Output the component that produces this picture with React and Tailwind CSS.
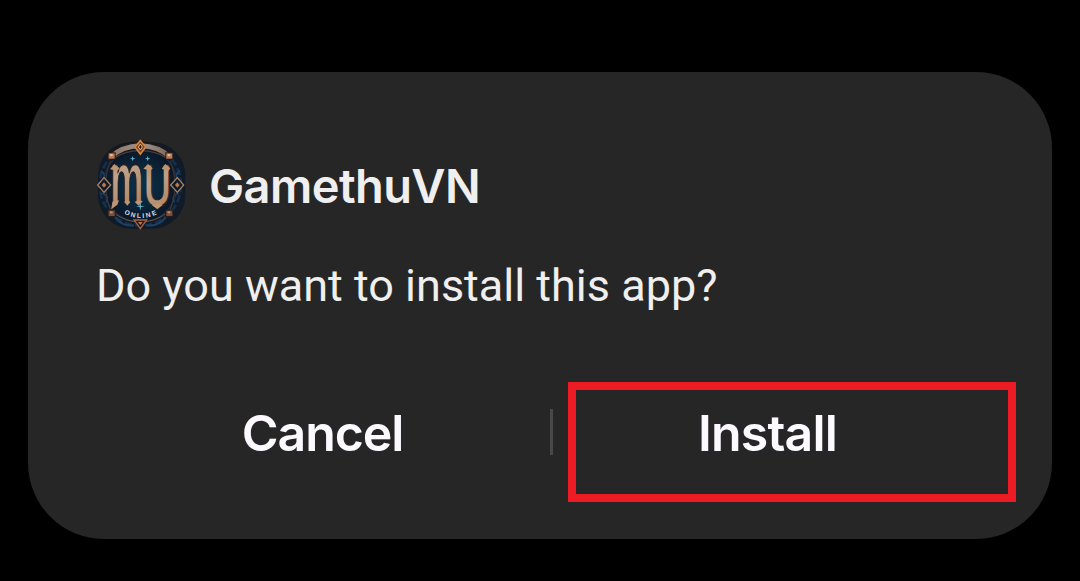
const STUDS = [
  { x: 65, y: 66 },
  { x: 238, y: 66 },
  { x: 65, y: 238 },
  { x: 238, y: 238 },
];

const SPARKS = [
  { x: 128, y: 74, r: 8 },
  { x: 173, y: 74, r: 8 },
  { x: 151, y: 217, r: 13 },
];

function GameLogo() {
  return (
    <svg viewBox="21 18 270 270" className="size-[90px] shrink-0 overflow-visible" aria-label="MU Online">
      <defs>
        <linearGradient id="bronze" x1="0" y1="0" x2="0.3" y2="1">
          <stop offset="0.15" stopColor="#b98a66" />
          <stop offset="0.5" stopColor="#bda18b" />
          <stop offset="1" stopColor="#b08560" />
        </linearGradient>
        <linearGradient id="arch" x1="0" y1="0" x2="1" y2="0">
          <stop offset="0" stopColor="#8d7565" />
          <stop offset="0.35" stopColor="#958983" />
          <stop offset="0.65" stopColor="#958983" />
          <stop offset="1" stopColor="#7b6458" />
        </linearGradient>
        <radialGradient id="night">
          <stop offset="0" stopColor="#0c3249" />
          <stop offset="0.6" stopColor="#0a2439" />
          <stop offset="1" stopColor="#0a1626" />
        </radialGradient>
      </defs>

      {/* Outer plate and filigree */}
      <rect x="24" y="24" width="262" height="260" rx="100" fill="#111a27" />
      <circle cx="151" cy="153" r="122" fill="none" stroke="#12304f" strokeWidth="8" strokeDasharray="22 9" />
      <circle cx="151" cy="153" r="111" fill="url(#night)" stroke="#1a2a3d" strokeWidth="4" />
      <path d="M33 110Q52 124 36 137M270 110Q250 124 266 137M34 178Q62 184 48 205M268 178Q240 184 254 205" fill="none" stroke="#1b456b" strokeWidth="4" />
      <path d="M75 250Q98 279 132 274M170 274Q204 279 227 250" fill="none" stroke="#1c4266" strokeWidth="6" />

      {/* Arch */}
      <path d="M62 69Q96 35 151 33Q206 35 240 69" fill="none" stroke="#1d1715" strokeWidth="24" />
      <path d="M62 69Q96 37 151 35Q206 37 240 69" fill="none" stroke="url(#arch)" strokeWidth="14" />
      <path d="M72 72Q104 51 151 50Q198 51 230 72" fill="none" stroke="#4d3d36" strokeWidth="4" />
      <path d="M62 82Q31 151 62 228M240 82Q271 151 240 228" fill="none" stroke="#3f332f" strokeWidth="4" />
      <path d="M76 240Q107 263 151 264Q195 263 226 240" fill="none" stroke="#65554a" strokeWidth="3" />

      {STUDS.map(({ x, y }) => (
        <g key={`${x}-${y}`}>
          <rect x={x - 12} y={y - 11} width="24" height="22" fill="#281b18" />
          <rect x={x - 9} y={y - 8} width="18" height="16" fill={y < 100 ? "#bf7c52" : "#75503f"} />
          <rect x={x - 5} y={y - 6} width="8" height="6" fill={y < 100 ? "#e9b690" : "#b98c6d"} />
        </g>
      ))}

      {/* Compass points */}
      <path d="M151 20L167 39L151 60L135 39Z" fill="#78431e" stroke="#cf8649" strokeWidth="5" />
      <path d="M151 30L157 39L151 48L145 39Z" fill="#351e19" stroke="#f1b97c" strokeWidth="3" />
      <path d="M42 131L62 153L42 175L23 153Z" fill="#151a22" stroke="#a58269" strokeWidth="4" />
      <path d="M42 145L49 153L42 161L35 153Z" fill="#b17858" />
      <path d="M262 131L281 153L262 175L242 153Z" fill="#151a22" stroke="#a58269" strokeWidth="4" />
      <path d="M262 145L269 153L262 161L255 153Z" fill="#b17858" />
      <path d="M132 258H170L151 284Z" fill="#24191a" stroke="#a3654a" strokeWidth="4" />
      <path d="M144 264H158L151 273Z" fill="#bd7855" />

      <g
        fontFamily="'Liberation Sans', sans-serif"
        fontWeight="700"
        fill="url(#bronze)"
        stroke="#2b1d1b"
        strokeWidth="2"
      >
        <text transform="translate(61 206) scale(1 2.05)" fontSize="106" textLength="100" lengthAdjust="spacingAndGlyphs">
          m
        </text>
        <text transform="translate(161 216) scale(1 1.68)" fontSize="106" textLength="82" lengthAdjust="spacingAndGlyphs">
          U
        </text>
      </g>

      {/* Blade tips on the monogram */}
      <g fill="#bd9474">
        <path d="M60 106L73 90L89 103L82 110Z" />
        <path d="M67 203L87 199L82 212L64 226Z" />
        <path d="M103 204L112 197L121 204L112 215Z" />
        <path d="M134 204L146 198L158 202L146 215Z" />
        <path d="M160 104L174 90L188 103L181 110Z" />
        <path d="M215 104L226 90L241 103L234 112Z" />
        <path d="M185 213L202 208L218 213L202 226Z" />
      </g>

      {SPARKS.map(({ x, y, r }) => (
        <path
          key={x}
          d={`M${x} ${y - r}L${x + 2} ${y - 2}L${x + r} ${y}L${x + 2} ${y + 2}L${x} ${y + r}L${x - 2} ${y + 2}L${x - r} ${y}L${x - 2} ${y - 2}Z`}
          fill="#62b4cb"
        />
      ))}

      <path id="ribbon" d="M102 239Q151 265 206 239" fill="none" />
      <text fontFamily="'Liberation Sans', sans-serif" fontSize="20" fontWeight="700" fill="#d8dce0">
        <textPath href="#ribbon" textLength="102">ONLINE</textPath>
      </text>
    </svg>
  );
}

export default function App() {
  return (
    <main className="h-[581px] w-[1080px] overflow-hidden bg-black px-7 pt-[72px]">
      <section
        role="dialog"
        aria-labelledby="app-name"
        className="flex h-[467px] flex-col rounded-[76px] bg-[#262626] pt-[68px]"
      >
        <header className="flex h-[90px] items-center gap-[22px] pl-[69px]">
          <GameLogo />
          <h1
            id="app-name"
            className="pt-0.5 font-['Inter'] text-[47px] leading-[60px] font-semibold tracking-[-0.6px] text-[#efefef]"
          >
            GamethuVN
          </h1>
        </header>

        <p className="mt-[26px] pl-[68px] font-['Roboto'] text-[45px] leading-[60px] whitespace-nowrap text-[#efefef]">
          Do you want to install this app?
        </p>

        <div className="mt-[66px] flex h-[120px] font-['Inter'] text-[50px] leading-[60px] font-semibold text-[#fcfaff]">
          <button className="ml-[68px] flex w-[453px] justify-center pt-[21px] tracking-[-1.1px]">Cancel</button>
          <span className="ml-px mt-[27px] h-[46px] w-[3px] bg-[#48484a]" />
          <button className="ml-[15px] flex w-[448px] justify-center border-8 border-[#ed1c24] pt-[13px] pr-[49px] tracking-[-0.8px]">
            Install
          </button>
        </div>
      </section>
    </main>
  );
}
